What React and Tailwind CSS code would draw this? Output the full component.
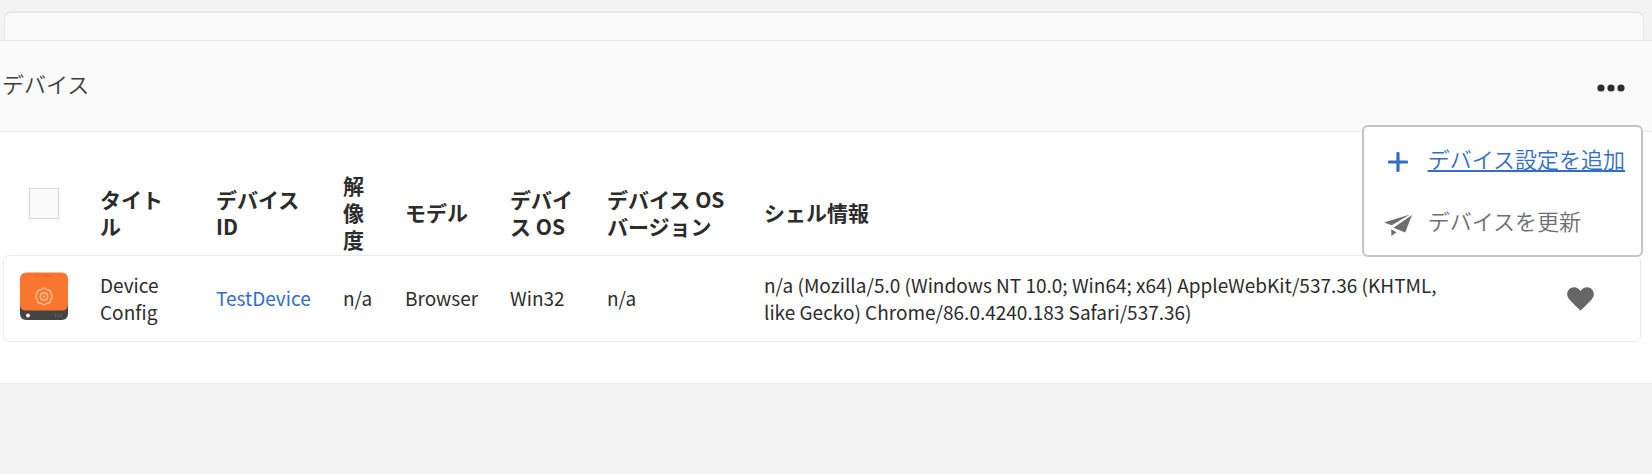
const columns = [
  { label: 'タイトル', width: 'w-[116px]', pad: 'pl-4 pr-6' },
  { label: 'デバイス ID', width: 'w-[127px]', pad: 'px-4' },
  { label: '解像度', width: 'w-[62px]', pad: 'px-4' },
  { label: 'モデル', width: 'w-[105px]', pad: 'px-4' },
  { label: 'デバイス OS', width: 'w-[97px]', pad: 'px-4' },
  { label: 'デバイス OS バージョン', width: 'w-[157px]', pad: 'px-4' },
  { label: 'シェル情報', width: '', pad: 'px-4' },
];

const devices = [
  {
    title: 'Device Config',
    id: 'TestDevice',
    resolution: 'n/a',
    model: 'Browser',
    os: 'Win32',
    osVersion: 'n/a',
    shell:
      'n/a (Mozilla/5.0 (Windows NT 10.0; Win64; x64) AppleWebKit/537.36 (KHTML, like Gecko) Chrome/86.0.4240.183 Safari/537.36)',
  },
];

function MoreIcon() {
  return (
    <svg viewBox="0 0 28 8" className="h-2 w-7" fill="#2c2c2c" aria-hidden="true">
      <circle cx="4" cy="4" r="3.6" />
      <circle cx="14" cy="4" r="3.6" />
      <circle cx="24" cy="4" r="3.6" />
    </svg>
  );
}

function PlusIcon() {
  return (
    <svg viewBox="0 0 20 20" className="h-5 w-5" fill="none" stroke="#326ec8" strokeWidth="3.2" strokeLinecap="round" aria-hidden="true">
      <path d="M10 1.4v17.200M1.400 10h17.200" />
    </svg>
  );
}

function SendIcon() {
  return (
    <svg viewBox="0 0 28 22" className="h-[22px] w-7" fill="#6e6e6e" aria-hidden="true">
      <path d="M0 8.600 26 .6 7.800 11.200Z" />
      <path d="M28 1 21.200 18.600 9.400 13.800Z" />
      <path d="M7.200 15.200 12.600 18.200 7.400 22Z" />
    </svg>
  );
}

function HeartIcon() {
  return (
    <svg viewBox="0 0 27 24" className="h-6 w-[27px]" fill="#666" aria-hidden="true">
      <path d="M13.5 23.5C10.2 20.2 5.6 16.3 2.4 12.5 .9 10.7.2 9 .2 7.1.2 3.2 3.3.3 7 .3c2.700 0 5.200 1.500 6.500 3.900C14.800 1.800 17.300.3 20 .3c3.700 0 6.800 2.900 6.800 6.800 0 1.900-.7 3.600-2.200 5.400-3.200 3.800-7.800 7.700-11.100 11Z" />
    </svg>
  );
}

function DeviceThumb() {
  const petals = [0, 45, 90, 135, 180, 225, 270, 315];
  return (
    <svg viewBox="0 0 48 48" className="block h-12 w-12" role="img" aria-label="Device Config">
      <rect y="20" width="48" height="28" rx="6" fill="#444" />
      <path d="M6 .5h36a6 6 0 0 1 6 6V33a5.500 5.500 0 0 1-5.500 5.500h-37A5.500 5.500 0 0 1 0 33V6.500a6 6 0 0 1 6-6Z" fill="#fa752f" />
      <path d="M16 3.800h3M22 3.800h10" stroke="#e8662a" strokeWidth="1.200" />
      <g fill="none" stroke="#fdba8c" strokeWidth="1.500" transform="translate(24 24.500)">
        {petals.map((angle) => (
          <path key={angle} d="M-2.700-6.500A2.900 2.900 0 0 1 2.700-6.500" transform={`rotate(${angle})`} />
        ))}
        <path d="M0-3.900 2.800-2.800 3.900 0 2.800 2.800 0 3.900-2.800 2.800-3.900 0-2.800-2.800Z" />
        <circle r="1.300" fill="#fdba8c" stroke="none" />
      </g>
      <circle cx="8" cy="43.500" r="2" fill="#fff" />
      <path d="M35.500 41.800v3.400M38.500 41.800v3.400M41.500 41.800v3.400" stroke="#5c5c5c" strokeWidth="1.300" />
    </svg>
  );
}

function ActionMenu() {
  return (
    <div className="absolute right-[9px] top-[84px] z-10 flex min-w-[281px] flex-col gap-[31px] rounded-md border-2 border-[#c4c4c4] bg-white pb-[19px] pl-5 pr-4 pt-4 text-[22px] leading-[31px] font-[350]">
      <a href="#add-device-config" className="flex items-center gap-4 text-[#326ec8]">
        <span className="flex w-7 justify-center pt-1.5"><PlusIcon /></span>
        <span className="underline decoration-2 underline-offset-2">デバイス設定を追加</span>
      </a>
      <button type="button" className="flex items-center gap-4 text-left text-[#6e6e6e]">
        <span className="flex w-7 justify-center pt-2"><SendIcon /></span>
        <span>デバイスを更新</span>
      </button>
    </div>
  );
}

export default function App() {
  const cell = 'border-y border-[#ebebeb] pb-[2px] align-middle';
  return (
    <div className="min-h-screen bg-[#f4f4f4] pt-[11px] font-['Noto_Sans_CJK_JP',sans-serif] text-[19px] leading-[27px] text-[#2c2c2c]">
      <div className="ml-1 mr-2 h-[29px] rounded-t-lg border-x border-t-2 border-[#e8e8e8] bg-[#fafafa]" />
      <section className="border-b border-[#ebebeb] bg-white">
        <header className="relative flex h-[92px] items-center justify-between border-y border-[#eaeaea] bg-[#fafafa] pl-[2px] pr-[27px]">
          <h2 className="pb-1.5 text-[22px] font-[350] text-[#3c3c3c]">デバイス</h2>
          <button type="button" aria-label="その他のアクション" className="pt-1">
            <MoreIcon />
          </button>
          <ActionMenu />
        </header>
        <div className="pb-[41px] pl-[3px] pr-[11px] pt-10">
          <table className="w-full table-fixed border-separate border-spacing-0 text-left">
            <thead>
              <tr>
                <th className="w-[81px] pl-[26px] align-middle">
                  <input
                    type="checkbox"
                    aria-label="すべて選択"
                    className="mb-5 block h-[31px] w-[30px] appearance-none border border-[#d8d8d8] bg-[#fafafa]"
                  />
                </th>
                {columns.map((c) => (
                  <th key={c.label} className={`${c.width} ${c.pad} pb-[2px] align-middle text-[21px] font-bold`}>
                    {c.label}
                  </th>
                ))}
                <td className="w-[180px]" />
              </tr>
            </thead>
            <tbody>
              {devices.map((d) => (
                <tr key={d.id} className="h-[87px]">
                  <td className="rounded-l-md border-y border-l border-[#ebebeb] pb-1.5 pl-4 align-middle">
                    <DeviceThumb />
                  </td>
                  <td className={`${cell} pl-4 pr-6`}>{d.title}</td>
                  <td className={`${cell} px-4`}>
                    <a href="#test-device" className="text-[#326ec8]">{d.id}</a>
                  </td>
                  <td className={`${cell} whitespace-nowrap px-4`}>{d.resolution}</td>
                  <td className={`${cell} px-4`}>{d.model}</td>
                  <td className={`${cell} px-4`}>{d.os}</td>
                  <td className={`${cell} px-4`}>{d.osVersion}</td>
                  <td className={`${cell} px-4`}>{d.shell}</td>
                  <td className="rounded-r-md border-y border-r border-[#ebebeb] pr-[46px] align-middle">
                    <button type="button" aria-label="ヘルス" className="ml-auto block pt-px">
                      <HeartIcon />
                    </button>
                  </td>
                </tr>
              ))}
            </tbody>
          </table>
        </div>
      </section>
    </div>
  );
}
